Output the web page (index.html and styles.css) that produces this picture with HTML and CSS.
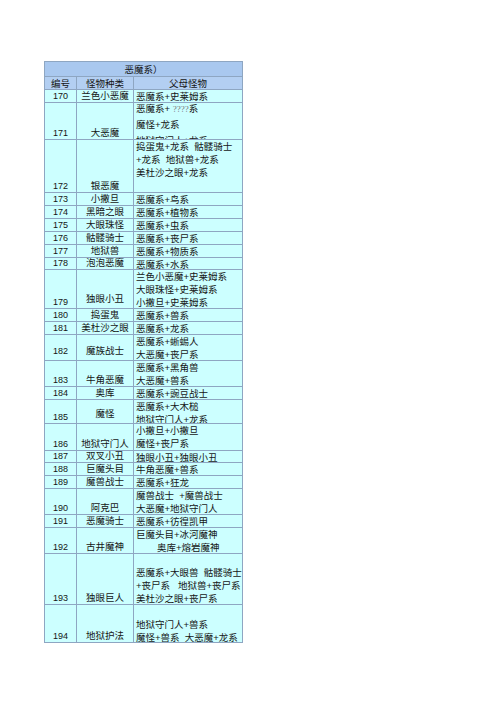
FILE: index.html
```html
<!DOCTYPE html>
<html lang="zh">
<head>
<meta charset="utf-8">
<title>恶魔系</title>
<link rel="stylesheet" href="styles.css">
</head>
<body>
<div class="sheet">
  <div class="row title h15"><div class="cell span">恶魔系）</div></div>
  <div class="row head h13"><div class="cell c">编号</div><div class="cell c">怪物种类</div><div class="cell c">父母怪物</div></div>

  <div class="row h13"><div class="cell num">170</div><div class="cell name">兰色小恶魔</div><div class="cell par"><div>恶魔系+史莱姆系</div></div></div>
  <div class="row h37"><div class="cell num">171</div><div class="cell name">大恶魔</div><div class="cell par wide"><div class="lift"><div>恶魔系+ <span class="q">????</span>系</div><div>魔怪+龙系</div><div>地狱守门人+龙系</div></div></div></div>
  <div class="row h53"><div class="cell num">172</div><div class="cell name">银恶魔</div><div class="cell par"><div>捣蛋鬼+龙系  骷髅骑士</div><div>+龙系  地狱兽+龙系</div><div>美杜沙之眼+龙系</div></div></div>
  <div class="row h13"><div class="cell num">173</div><div class="cell name">小撒旦</div><div class="cell par"><div>恶魔系+鸟系</div></div></div>
  <div class="row h13"><div class="cell num">174</div><div class="cell name">黑暗之眼</div><div class="cell par"><div>恶魔系+植物系</div></div></div>
  <div class="row h13"><div class="cell num">175</div><div class="cell name">大眼珠怪</div><div class="cell par"><div>恶魔系+虫系</div></div></div>
  <div class="row h13"><div class="cell num">176</div><div class="cell name">骷髅骑士</div><div class="cell par"><div>恶魔系+丧尸系</div></div></div>
  <div class="row h13"><div class="cell num">177</div><div class="cell name">地狱兽</div><div class="cell par"><div>恶魔系+物质系</div></div></div>
  <div class="row h12"><div class="cell num">178</div><div class="cell name">泡泡恶魔</div><div class="cell par"><div>恶魔系+水系</div></div></div>
  <div class="row h39"><div class="cell num">179</div><div class="cell name raise">独眼小丑</div><div class="cell par"><div>兰色小恶魔+史莱姆系</div><div>大眼珠怪+史莱姆系</div><div>小撒旦+史莱姆系</div></div></div>
  <div class="row h13"><div class="cell num">180</div><div class="cell name">捣蛋鬼</div><div class="cell par"><div>恶魔系+兽系</div></div></div>
  <div class="row h13"><div class="cell num">181</div><div class="cell name">美杜沙之眼</div><div class="cell par"><div>恶魔系+龙系</div></div></div>
  <div class="row h26"><div class="cell num raise">182</div><div class="cell name raise">魔族战士</div><div class="cell par"><div>恶魔系+蜥蜴人</div><div>大恶魔+丧尸系</div></div></div>
  <div class="row h26"><div class="cell num">183</div><div class="cell name">牛角恶魔</div><div class="cell par"><div>恶魔系+黑角兽</div><div>大恶魔+兽系</div></div></div>
  <div class="row h13"><div class="cell num">184</div><div class="cell name">奥库</div><div class="cell par"><div>恶魔系+豌豆战士</div></div></div>
  <div class="row h24"><div class="cell num">185</div><div class="cell name raise">魔怪</div><div class="cell par"><div>恶魔系+大木槌</div><div>地狱守门人+龙系</div></div></div>
  <div class="row h27"><div class="cell num">186</div><div class="cell name">地狱守门人</div><div class="cell par"><div>小撒旦+小撒旦</div><div>魔怪+丧尸系</div></div></div>
  <div class="row h12"><div class="cell num">187</div><div class="cell name">双叉小丑</div><div class="cell par"><div>独眼小丑+独眼小丑</div></div></div>
  <div class="row h13"><div class="cell num">188</div><div class="cell name">巨魔头目</div><div class="cell par"><div>牛角恶魔+兽系</div></div></div>
  <div class="row h13"><div class="cell num">189</div><div class="cell name">魔兽战士</div><div class="cell par"><div>恶魔系+狂龙</div></div></div>
  <div class="row h26"><div class="cell num">190</div><div class="cell name">阿克巴</div><div class="cell par"><div>魔兽战士  +魔兽战士</div><div>大恶魔+地狱守门人</div></div></div>
  <div class="row h13"><div class="cell num">191</div><div class="cell name">恶魔骑士</div><div class="cell par"><div>恶魔系+彷徨凯甲</div></div></div>
  <div class="row h26"><div class="cell num">192</div><div class="cell name">古井魔神</div><div class="cell par"><div>巨魔头目+冰河魔神</div><div class="indent">奥库+熔岩魔神</div></div></div>
  <div class="row h51"><div class="cell num">193</div><div class="cell name">独眼巨人</div><div class="cell par pad12"><div>恶魔系+大眼兽  骷髅骑士</div><div>+丧尸系   地狱兽+丧尸系</div><div>美杜沙之眼+丧尸系</div></div></div>
  <div class="row h38"><div class="cell num">194</div><div class="cell name">地狱护法</div><div class="cell par pad13"><div>地狱守门人+兽系</div><div>魔怪+兽系  大恶魔+龙系</div></div></div>
</div>
</body>
</html>
```

FILE: styles.css
```css
html, body {
  margin: 0;
  padding: 0;
  background: #ffffff;
}

body {
  font-family: "Liberation Sans", "Noto Sans CJK SC", sans-serif;
  font-size: 9.5px;
  color: #151515;
}

.sheet {
  margin: 61px 0 0 44px;
  width: 199px;
  box-sizing: border-box;
  border-left: 1px solid #8ea6c2;
  border-top: 1px solid #8ea6c2;
  display: flex;
  flex-direction: column;
}

.row {
  display: grid;
  grid-template-columns: 32px 57px 109px;
  background: #ccffff;
}

.row.title {
  grid-template-columns: 198px;
  background: #a9c8ef;
}

.row.head {
  background: #b3cff2;
}

.cell {
  box-sizing: border-box;
  border-right: 1px solid #8ea6c2;
  border-bottom: 1px solid #8ea6c2;
  overflow: hidden;
  white-space: pre;
  min-height: 0;
}

.span,
.c {
  display: flex;
  align-items: center;
  justify-content: center;
  line-height: 13px;
}

.num {
  display: flex;
  align-items: flex-end;
  justify-content: center;
  line-height: 11px;
  font-size: 9px;
}

.name {
  display: flex;
  align-items: flex-end;
  justify-content: center;
  line-height: 13px;
}

.raise {
  padding-bottom: 3px;
}

.par {
  padding-left: 2px;
  line-height: 13px;
}

.par.wide {
  line-height: 16px;
}

.lift {
  margin-top: -2px;
}

.par.pad12 {
  padding-top: 12px;
}

.par.pad13 {
  padding-top: 13px;
}

.indent {
  padding-left: 21px;
}

.q {
  font-family: "Liberation Serif", serif;
  color: #777777;
  font-size: 9px;
}

.h12 { height: 12px; }
.h13 { height: 13px; }
.h15 { height: 15px; }
.h24 { height: 24px; }
.h26 { height: 26px; }
.h27 { height: 27px; }
.h37 { height: 37px; }
.h38 { height: 38px; }
.h39 { height: 39px; }
.h51 { height: 51px; }
.h53 { height: 53px; }
```
